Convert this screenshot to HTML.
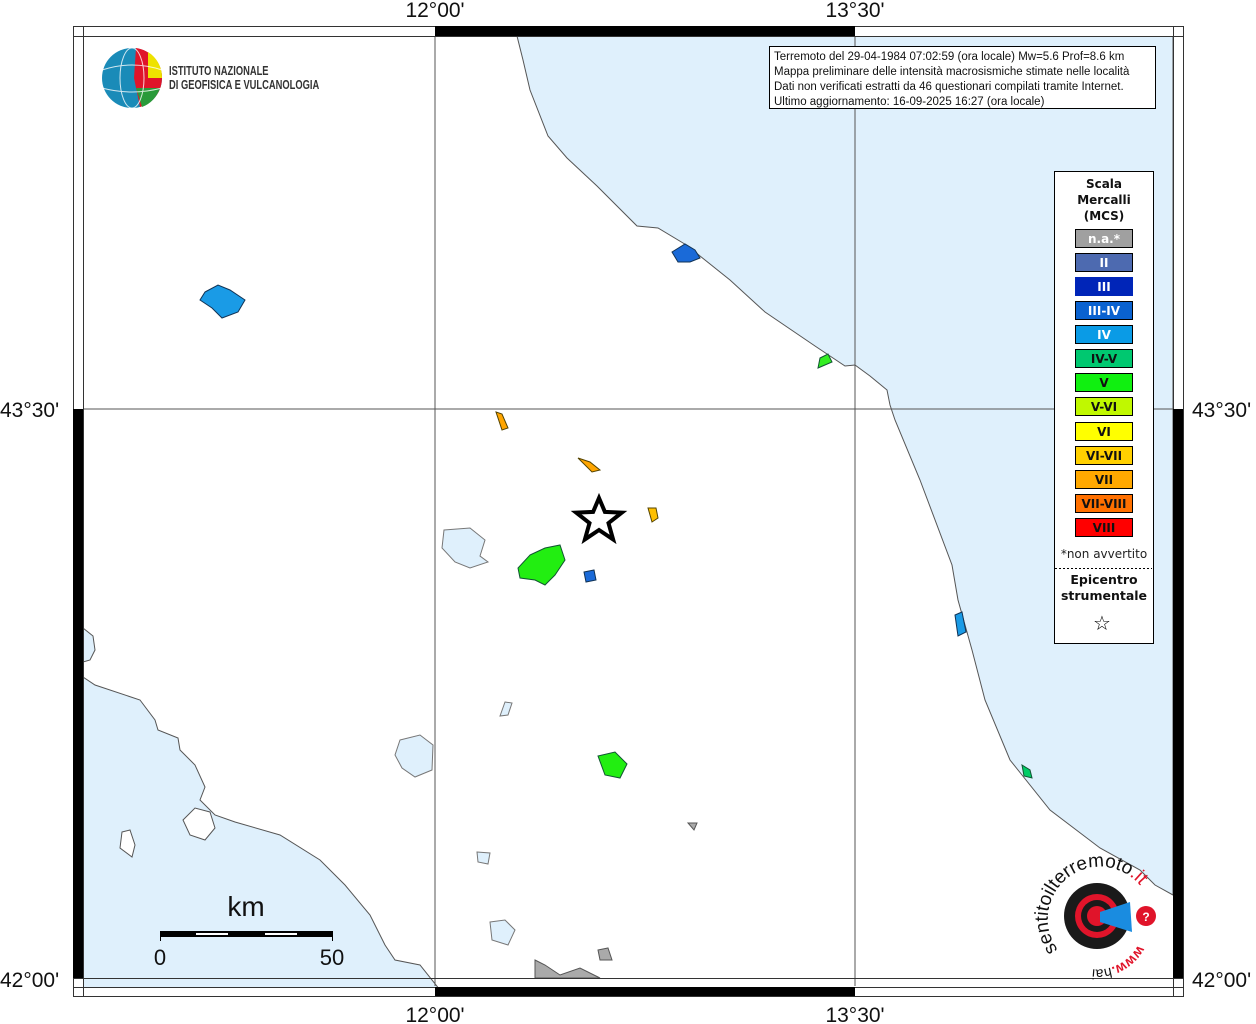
<!DOCTYPE html>
<html><head><meta charset="utf-8"><style>
body{margin:0;background:#fff;width:1256px;height:1024px;overflow:hidden;font-family:"Liberation Sans",sans-serif}
svg{position:absolute;left:0;top:0}
</style></head><body>
<svg width="1256" height="1024" viewBox="0 0 1256 1024" xmlns="http://www.w3.org/2000/svg">
<defs><clipPath id="m"><rect x="83" y="36" width="1090" height="951"/></clipPath></defs>
<g clip-path="url(#m)">
<rect x="83" y="36" width="1090" height="951" fill="#fff"/>
<path d="M517,36 L523,60 L530,90 L548,136 L567,158 L597,186 L637,226 L658,228 L688,246 L700,256 L730,280 L765,312 L815,346 L845,366 L855,365 L870,376 L887,390 L890,405 L895,420 L920,480 L952,565 L958,600 L972,650 L985,700 L1010,760 L1050,810 L1100,848 L1140,870 L1155,885 L1173,895 L1173,36 Z" fill="#dff0fc" stroke="#555" stroke-width="1"/>
<path d="M83,677 L95,685 L140,700 L155,720 L158,730 L178,738 L180,750 L195,765 L205,787 L200,800 L215,815 L235,822 L280,835 L320,860 L345,885 L370,915 L385,945 L395,960 L420,965 L440,990 L83,990 Z" fill="#dff0fc" stroke="#555" stroke-width="1"/>
<path d="M83,628 L93,636 L95,650 L90,660 L83,662 Z" fill="#dff0fc" stroke="#555"/>
<path d="M210,812 L195,808 L183,820 L190,835 L205,840 L215,828 Z" fill="#fff" stroke="#555"/>
<path d="M122,832 L130,830 L135,845 L132,857 L120,848 Z" fill="#fff" stroke="#555"/>
<path d="M444,530 L470,528 L485,540 L480,556 L488,562 L470,568 L455,562 L442,548 Z" fill="#dff0fc" stroke="#777"/>
<path d="M400,740 L420,735 L433,745 L432,770 L415,777 L402,768 L395,755 Z" fill="#dff0fc" stroke="#777"/>
<path d="M490,922 L505,920 L515,930 L508,945 L492,940 Z" fill="#dff0fc" stroke="#777"/>
<path d="M477,852 L490,853 L488,864 L478,862 Z" fill="#dff0fc" stroke="#777"/>
<path d="M505,702 L512,703 L508,715 L500,716 Z" fill="#dff0fc" stroke="#777"/>
<path d="M205,292 L218,285 L230,290 L245,300 L238,312 L222,318 L212,308 L200,300 Z" fill="#1a9be6" stroke="#135"/>
<path d="M672,252 L685,244 L695,250 L700,258 L690,262 L678,262 Z" fill="#1a6ad8" stroke="#135"/>
<path d="M820,358 L828,354 L832,362 L818,368 Z" fill="#33ee22" stroke="#153"/>
<path d="M496,412 L502,414 L508,428 L502,430 Z" fill="#ffa500" stroke="#540"/>
<path d="M578,458 L590,462 L600,470 L592,472 Z" fill="#ffa500" stroke="#540"/>
<path d="M648,508 L656,508 L658,518 L652,522 Z" fill="#ffc000" stroke="#540"/>
<path d="M530,555 L545,548 L560,545 L565,560 L555,575 L545,585 L535,580 L520,578 L518,568 Z" fill="#22ee11" stroke="#153"/>
<path d="M584,572 L594,570 L596,580 L586,582 Z" fill="#1a6ad8" stroke="#135"/>
<path d="M598,756 L615,752 L627,764 L620,778 L605,775 Z" fill="#22ee11" stroke="#153"/>
<path d="M955,615 L962,612 L966,632 L958,636 Z" fill="#1a9be6" stroke="#135"/>
<path d="M1022,765 L1030,770 L1032,778 L1024,776 Z" fill="#00cc66" stroke="#153"/>
<path d="M535,960 L545,965 L560,975 L580,968 L600,978 L535,978 Z" fill="#aaa" stroke="#555"/>
<path d="M598,950 L608,948 L612,960 L600,960 Z" fill="#aaa" stroke="#555"/>
<path d="M688,823 L697,823 L694,830 Z" fill="#aaa" stroke="#555"/>
<line x1="435" y1="36" x2="435" y2="986" stroke="#555"/>
<line x1="855" y1="36" x2="855" y2="986" stroke="#555"/>
<line x1="83" y1="409" x2="1173" y2="409" stroke="#555"/>
</g>
<rect x="73.5" y="26.5" width="1110" height="970" fill="none" stroke="#333"/>
<line x1="83.5" y1="26" x2="83.5" y2="996" stroke="#333"/>
<line x1="1173.5" y1="26" x2="1173.5" y2="996" stroke="#333"/>
<line x1="73" y1="36.5" x2="1183" y2="36.5" stroke="#333"/>
<line x1="73" y1="978.5" x2="1183" y2="978.5" stroke="#333"/>
<line x1="73" y1="987.5" x2="1183" y2="987.5" stroke="#333"/>
<rect x="435" y="26" width="420" height="10" fill="#000"/>
<rect x="435" y="987" width="420" height="9" fill="#000"/>
<rect x="73" y="409" width="10" height="569" fill="#000"/>
<rect x="1173" y="409" width="10" height="569" fill="#000"/>
<g font-size="21" fill="#111" font-family="Liberation Sans">
<text x="435" y="17" text-anchor="middle">12°00'</text>
<text x="855" y="17" text-anchor="middle">13°30'</text>
<text x="435" y="1022" text-anchor="middle">12°00'</text>
<text x="855" y="1022" text-anchor="middle">13°30'</text>
<text x="0" y="417">43°30'</text>
<text x="1192" y="417">43°30'</text>
<text x="0" y="987">42°00'</text>
<text x="1192" y="987">42°00'</text>
</g>
<polygon points="599,498 604.9,511.9 621.8,512.6 608.5,523.1 613.1,539.4 599,530 584.9,539.4 589.5,523.1 576.2,512.6 593.1,511.9" fill="#fff" stroke="#000" stroke-width="4"/>
<rect x="769.5" y="46.5" width="386" height="62" fill="#fff" stroke="#000"/>
<g font-size="11.5" fill="#111">
<text x="774" y="60">Terremoto del 29-04-1984 07:02:59 (ora locale) Mw=5.6 Prof=8.6 km</text>
<text x="774" y="75">Mappa preliminare delle intensità macrosismiche stimate nelle località</text>
<text x="774" y="90">Dati non verificati estratti da 46 questionari compilati tramite Internet.</text>
<text x="774" y="105">Ultimo aggiornamento: 16-09-2025 16:27 (ora locale)</text>
</g>
<rect x="1054.5" y="171.5" width="99" height="472" fill="#fff" stroke="#000"/>
<g font-family="DejaVu Sans" font-weight="bold" font-size="12" text-anchor="middle" fill="#111">
<text x="1104" y="188">Scala</text><text x="1104" y="204">Mercalli</text><text x="1104" y="220">(MCS)</text>
</g>
<g stroke="#000">
<rect x="1075.5" y="229.5" width="57" height="18" fill="#a0a0a0"/>
<rect x="1075.5" y="253.5" width="57" height="18" fill="#4d6ab0"/>
<rect x="1075.5" y="277.5" width="57" height="18" fill="#0025b8" stroke="#0025b8"/>
<rect x="1075.5" y="301.5" width="57" height="18" fill="#0a62d0"/>
<rect x="1075.5" y="325.5" width="57" height="18" fill="#0a9be6"/>
<rect x="1075.5" y="349.5" width="57" height="18" fill="#00c870"/>
<rect x="1075.5" y="373.5" width="57" height="18" fill="#10f010"/>
<rect x="1075.5" y="397.5" width="57" height="18" fill="#c0f800"/>
<rect x="1075.5" y="422.5" width="57" height="18" fill="#ffff00"/>
<rect x="1075.5" y="446.5" width="57" height="18" fill="#ffd000"/>
<rect x="1075.5" y="470.5" width="57" height="18" fill="#ffa800"/>
<rect x="1075.5" y="494.5" width="57" height="18" fill="#ff7000"/>
<rect x="1075.5" y="518.5" width="57" height="18" fill="#ff0000"/>
</g>
<g font-family="DejaVu Sans" font-weight="bold" font-size="12" text-anchor="middle">
<text x="1104" y="243" fill="#fff">n.a.*</text>
<text x="1104" y="267" fill="#fff">II</text>
<text x="1104" y="291" fill="#fff">III</text>
<text x="1104" y="315" fill="#fff">III-IV</text>
<text x="1104" y="339" fill="#fff">IV</text>
<text x="1104" y="363" fill="#111">IV-V</text>
<text x="1104" y="387" fill="#111">V</text>
<text x="1104" y="411" fill="#111">V-VI</text>
<text x="1104" y="436" fill="#111">VI</text>
<text x="1104" y="460" fill="#111">VI-VII</text>
<text x="1104" y="484" fill="#111">VII</text>
<text x="1104" y="508" fill="#111">VII-VIII</text>
<text x="1104" y="532" fill="#111">VIII</text>
</g>
<text x="1104" y="558" font-family="DejaVu Sans" font-size="12" text-anchor="middle" fill="#222">*non avvertito</text>
<line x1="1055" y1="568.5" x2="1152" y2="568.5" stroke="#000" stroke-dasharray="2,2"/>
<g font-family="DejaVu Sans" font-weight="bold" font-size="12.5" text-anchor="middle" fill="#111">
<text x="1104" y="584">Epicentro</text><text x="1104" y="600">strumentale</text>
</g>
<text x="1102" y="630" font-size="20" text-anchor="middle" font-family="DejaVu Sans">☆</text>
<text x="246" y="916" font-size="28" text-anchor="middle" fill="#111">km</text>
<rect x="160" y="931" width="173" height="6" fill="#000"/>
<rect x="196" y="933" width="32" height="2" fill="#fff"/>
<rect x="265" y="933" width="32" height="2" fill="#fff"/>
<line x1="160.5" y1="931" x2="160.5" y2="941" stroke="#000"/>
<line x1="332.5" y1="931" x2="332.5" y2="941" stroke="#000"/>
<text x="160" y="965" font-size="22" text-anchor="middle" fill="#111">0</text>
<text x="332" y="965" font-size="22" text-anchor="middle" fill="#111">50</text>
<circle cx="132" cy="78" r="30" fill="#1a8bb8"/>
<path d="M136,48 A30,30 0 0 1 162,78 A30,30 0 0 1 140,107 L134,78 Z" fill="#e0142a"/>
<path d="M148,52 A30,30 0 0 1 162,78 L148,78 Z" fill="#eee200"/>
<path d="M136,88 L160,88 A30,30 0 0 1 142,107 Z" fill="#2a9a3a"/>
<g stroke="#fff" stroke-width="1" fill="none" opacity=".8"><ellipse cx="132" cy="78" rx="12" ry="30"/><path d="M102,70 Q132,60 162,70 M102,88 Q132,96 162,88"/></g>
<text x="169" y="75" font-size="13" font-weight="bold" fill="#333" transform="translate(169,0) scale(0.72,1) translate(-169,0)">ISTITUTO NAZIONALE</text>
<text x="169" y="89" font-size="13" font-weight="bold" fill="#333" transform="translate(169,0) scale(0.72,1) translate(-169,0)">DI GEOFISICA E VULCANOLOGIA</text>
<circle cx="1097" cy="916" r="33" fill="#1a1a1a"/>
<circle cx="1097" cy="916" r="22" fill="#e0142a"/>
<circle cx="1097" cy="916" r="16" fill="#1a1a1a"/>
<circle cx="1097" cy="916" r="10" fill="#e0142a"/>
<path d="M1100,912 L1130,902 L1132,932 L1100,922 Z" fill="#1a8ce0"/>
<circle cx="1146" cy="916" r="10" fill="#e0142a"/>
<text x="1146" y="921" font-size="12" fill="#fff" text-anchor="middle" font-weight="bold">?</text>
<path id="arc" d="M1058,950 A48,48 0 1 1 1142,888" fill="none"/>
<text font-size="19" fill="#111"><textPath href="#arc">sentitoilterremoto<tspan fill="#e0142a">.it</tspan></textPath></text>
<path id="arc2" d="M1138,945 A46,46 0 0 1 1080,966" fill="none"/>
<text font-size="14" fill="#e0142a" font-weight="bold"><textPath href="#arc2">www.<tspan fill="#111" font-weight="normal">hai</tspan></textPath></text>
</svg>
</body></html>
